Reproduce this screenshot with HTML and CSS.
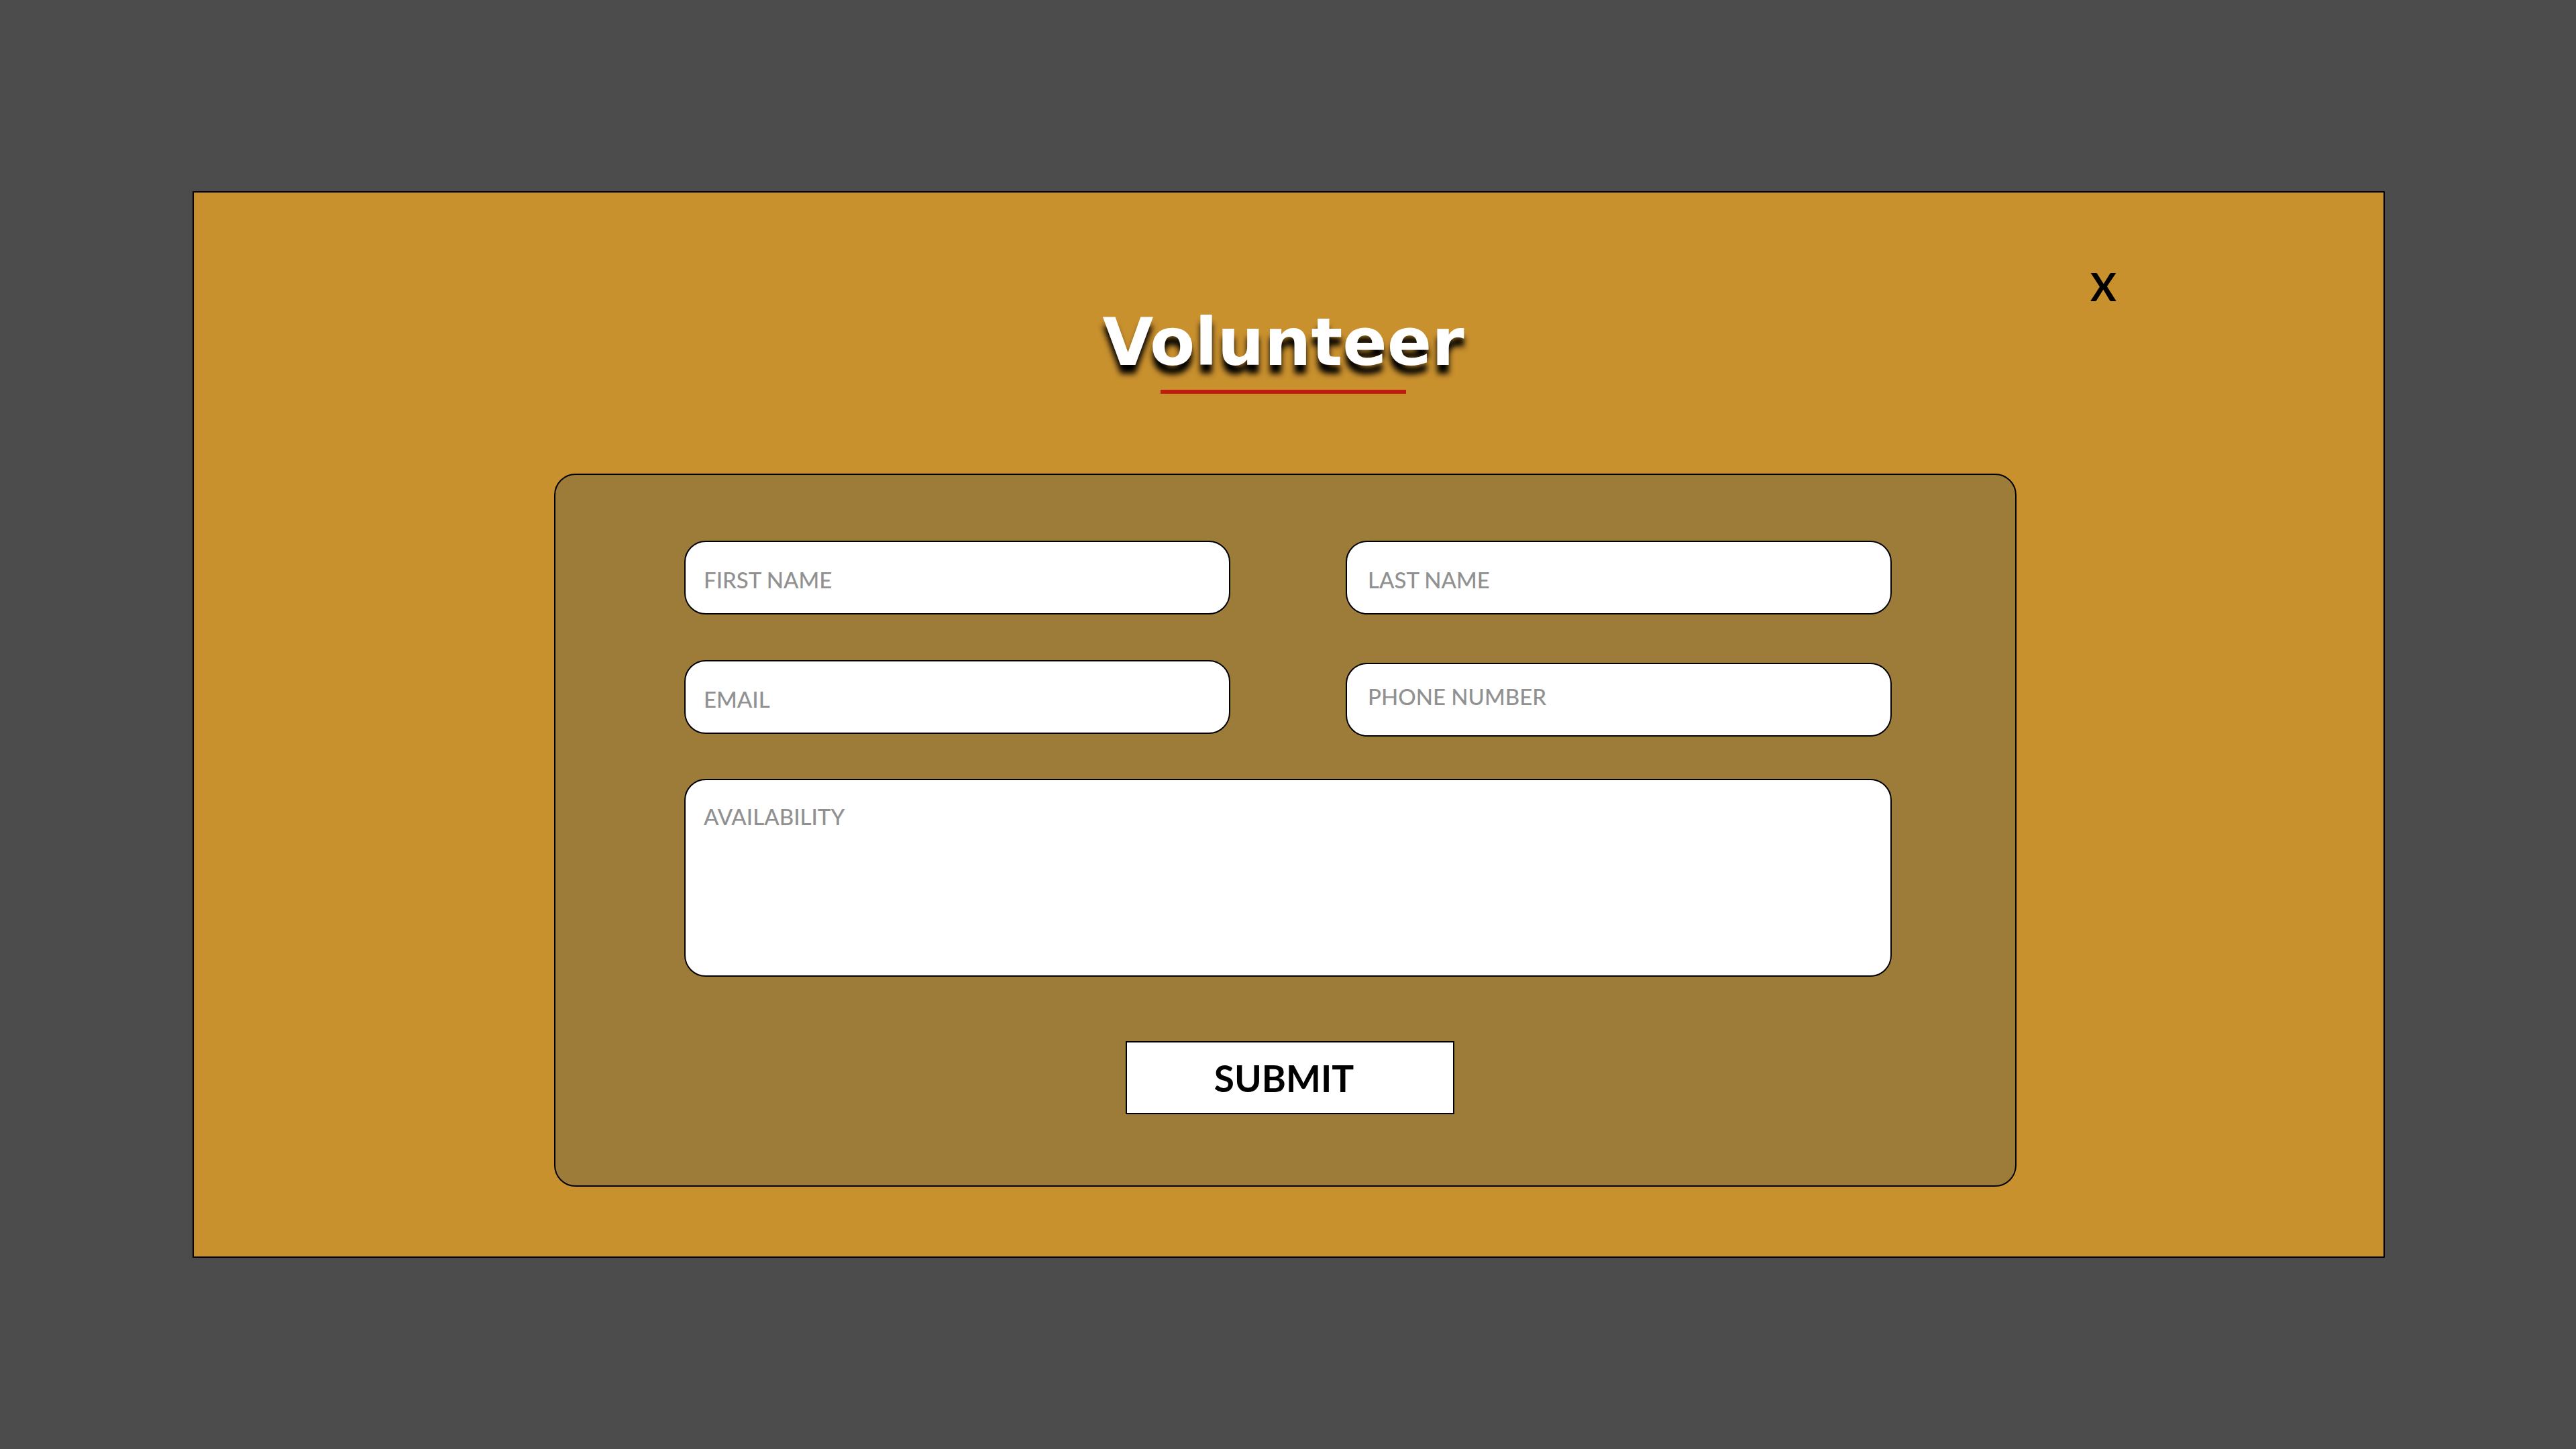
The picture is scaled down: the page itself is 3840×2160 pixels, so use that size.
FILE: index.html
```
<!DOCTYPE html>
<html lang="en">
<head>
<meta charset="utf-8">
<meta name="viewport" content="width=device-width, initial-scale=1">
<title>Volunteer</title>
<link rel="stylesheet" href="styles.css">
</head>
<body>
<main class="panel">
  <div class="toolbar">
    <button class="close" type="button" aria-label="Close">X</button>
  </div>
  <header class="heading">
    <h1 class="title">Volunteer</h1>
    <hr class="rule">
  </header>
  <form class="card">
    <div class="columns">
      <div class="column">
        <input class="field" type="text" name="first" placeholder="FIRST NAME" aria-label="First name">
        <input class="field" type="email" name="email" placeholder="EMAIL" aria-label="Email">
      </div>
      <div class="column column-right">
        <input class="field" type="text" name="last" placeholder="LAST NAME" aria-label="Last name">
        <input class="field field-raised" type="tel" name="phone" placeholder="PHONE NUMBER" aria-label="Phone number">
      </div>
    </div>
    <textarea class="field area" name="availability" placeholder="AVAILABILITY" aria-label="Availability"></textarea>
    <button class="submit" type="submit">SUBMIT</button>
  </form>
</main>
</body>
</html>
```
FILE: styles.css
```
* {
  box-sizing: border-box;
}

body {
  margin: 0;
  padding: 285px 285px 285px 287px;
  background: #4c4c4c;
  font-family: "Trebuchet MS", Lato, sans-serif;
  color: #000;
}

.panel {
  display: flex;
  flex-direction: column;
  padding: 110px 0 104px;
  background: #c9902e;
  border: 2px solid #000;
}

.toolbar {
  display: flex;
  justify-content: flex-end;
  padding-right: 388px;
}

.close {
  padding: 0 10px;
  border: 0;
  background: none;
  font: bold 58px/60px "Trebuchet MS", Lato, sans-serif;
  color: inherit;
  cursor: pointer;
}

.heading {
  display: flex;
  flex-direction: column;
  align-items: center;
  gap: 23px;
  padding: 5px 16px 0 0;
}

.title {
  margin: 0;
  font: bold 98px/96px Broadway, "DejaVu Sans", sans-serif;
  color: #fff;
  text-shadow: 0 13px 8px #000;
}

.rule {
  width: 366px;
  height: 6px;
  margin: 0;
  border: 0;
  background: #bf1b0e;
}

.card {
  display: flex;
  flex-direction: column;
  margin: 119px 547px 0 537px;
  padding: 98px 184px 106px 192px;
  background: #9d7b38;
  border: 2px solid #000;
  border-radius: 32px;
}

.columns {
  display: grid;
  grid-template-columns: 1fr 1fr;
  gap: 172px;
}

.column {
  display: flex;
  flex-direction: column;
  gap: 68px;
}

.column-right {
  gap: 72px;
}

.field {
  display: block;
  width: 100%;
  height: 110px;
  margin: 0;
  padding: 6px 27px 0;
  background: #fff;
  border: 2px solid #000;
  border-radius: 32px;
  font: 500 33px/40px "Trebuchet MS", Lato, sans-serif;
  color: #000;
}

.column-right .field {
  padding-left: 31px;
}

.field-raised {
  padding-top: 0;
  padding-bottom: 10px;
}

.field::placeholder {
  color: #919191;
  opacity: 1;
}

.area {
  height: 295px;
  margin-top: 63px;
  padding-top: 34px;
  resize: none;
}

.submit {
  align-self: center;
  width: 490px;
  height: 109px;
  margin: 96px 0 0 6px;
  padding: 0 18px 0 0;
  background: #fff;
  border: 2px solid #000;
  font: bold 55px/60px "Trebuchet MS", Lato, sans-serif;
  color: #000;
  cursor: pointer;
}
```
